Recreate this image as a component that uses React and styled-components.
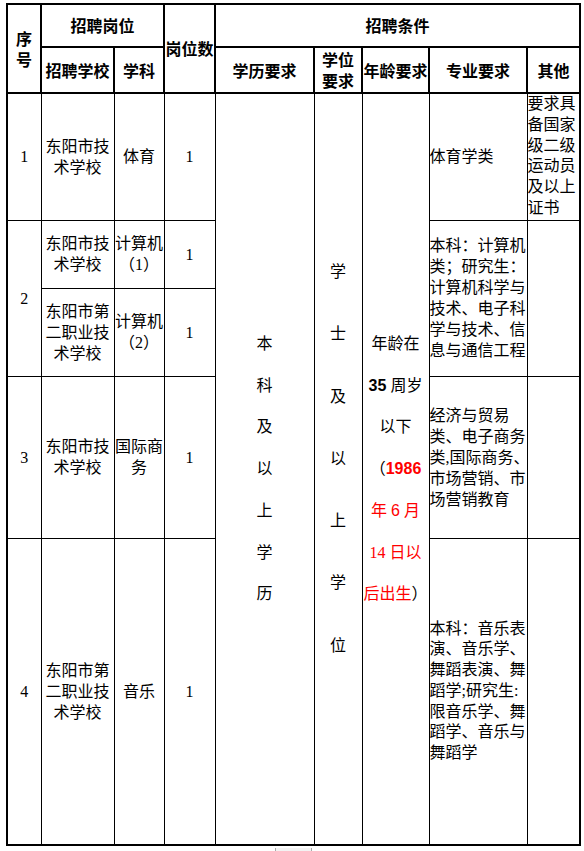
import React from "react";
import styled, { createGlobalStyle } from "styled-components";

const GlobalStyle = createGlobalStyle`
  html, body { margin: 0; padding: 0; background: #fff; }
  body {
    font-family: "Liberation Serif", "Noto Sans CJK SC", serif;
    color: #000;
  }
`;

const Page = styled.div`
  width: 584px;
  height: 851px;
  box-sizing: border-box;
  padding: 3px 0 0 6px;
  overflow: hidden;
`;

const Table = styled.table`
  border-collapse: collapse;
  table-layout: fixed;
  width: 573px;
  border: 2px solid #000;
`;

const Row = styled.tr`
  height: ${(p) => p.$h}px;
`;

const Th = styled.th`
  border: 2px solid #000;
  padding: 0;
  font-family: "Noto Sans CJK SC", sans-serif;
  font-weight: bold;
  font-size: 16px;
  line-height: 21px;
  text-align: center;
  vertical-align: middle;
  white-space: nowrap;
`;

const Td = styled.td`
  border: 1px solid #000;
  padding: 0;
  font-size: 16px;
  line-height: ${(p) => p.$lh || 21}px;
  text-align: ${(p) => p.$align || "center"};
  vertical-align: ${(p) => p.$valign || "middle"};
  white-space: nowrap;
  overflow: visible;
`;

const VText = styled.div`
  line-height: ${(p) => p.$lh}px;
  padding-bottom: ${(p) => p.$shift || 0}px;
  text-align: center;
`;

const Bold = styled.span`
  font-family: "Liberation Sans", "Noto Sans CJK SC", sans-serif;
  font-weight: bold;
`;

const Red = styled.span`
  color: #ff0000;
`;

const Sans = styled.span`
  font-family: "Liberation Sans", sans-serif;
`;

const Tab = styled.div`
  margin: 2px 0 0 269px;
  width: 35px;
  height: 8px;
  border-left: 1px solid #aaa;
  border-right: 1px solid #aaa;
  background: #f3f3f3;
  display: flex;
  justify-content: center;
  align-items: flex-end;
`;

const Dot = styled.span`
  width: 1px;
  height: 1px;
  background: #666;
  margin-bottom: 1px;
`;

const widths = [34, 73, 50, 51, 99, 48, 67, 98, 53];

const lines = (arr) =>
  arr.map((l, i) => (
    <React.Fragment key={i}>
      {i > 0 && <br />}
      {l}
    </React.Fragment>
  ));

export default function App() {
  return (
    <>
      <GlobalStyle />
      <Page>
        <Table>
          <colgroup>
            {widths.map((w, i) => (
              <col key={i} style={{ width: w }} />
            ))}
          </colgroup>
          <thead>
            <Row $h={43}>
              <Th rowSpan={2}>{lines(["序", "号"])}</Th>
              <Th colSpan={2}>招聘岗位</Th>
              <Th rowSpan={2}>岗位数</Th>
              <Th colSpan={5}>招聘条件</Th>
            </Row>
            <Row $h={46}>
              <Th>招聘学校</Th>
              <Th>学科</Th>
              <Th>学历要求</Th>
              <Th>{lines(["学位", "要求"])}</Th>
              <Th>年龄要求</Th>
              <Th>专业要求</Th>
              <Th>其他</Th>
            </Row>
          </thead>
          <tbody>
            <Row $h={127}>
              <Td>1</Td>
              <Td>{lines(["东阳市技", "术学校"])}</Td>
              <Td>体育</Td>
              <Td>1</Td>
              <Td rowSpan={5}>
                <VText $lh={41.7}>
                  {lines(["本", "科", "及", "以", "上", "学", "历"])}
                </VText>
              </Td>
              <Td rowSpan={5}>
                <VText $lh={62.3} $shift={20}>
                  {lines(["学", "士", "及", "以", "上", "学", "位"])}
                </VText>
              </Td>
              <Td rowSpan={5}>
                <VText $lh={41.7}>
                  年龄在
                  <br />
                  <Bold>35</Bold> 周岁
                  <br />
                  以下
                  <br />
                  （<Red><Bold>1986</Bold></Red>
                  <br />
                  <Red>
                    年 <Sans>6</Sans> 月
                  </Red>
                  <br />
                  <Red>14 日以</Red>
                  <br />
                  <Red>后出生</Red>）
                </VText>
              </Td>
              <Td $align="left">体育学类</Td>
              <Td $align="left" $valign="top" $lh={20.8}>
                {lines(["要求具", "备国家", "级二级", "运动员", "及以上", "证书"])}
              </Td>
            </Row>
            <Row $h={68}>
              <Td rowSpan={2}>2</Td>
              <Td>{lines(["东阳市技", "术学校"])}</Td>
              <Td>{lines(["计算机", "（1）"])}</Td>
              <Td>1</Td>
              <Td rowSpan={2} $align="left">
                {lines([
                  "本科：计算机",
                  "类；研究生：",
                  "计算机科学与",
                  "技术、电子科",
                  "学与技术、信",
                  "息与通信工程",
                ])}
              </Td>
              <Td rowSpan={2} />
            </Row>
            <Row $h={88}>
              <Td>{lines(["东阳市第", "二职业技", "术学校"])}</Td>
              <Td>{lines(["计算机", "（2）"])}</Td>
              <Td>1</Td>
            </Row>
            <Row $h={162}>
              <Td>3</Td>
              <Td>{lines(["东阳市技", "术学校"])}</Td>
              <Td>{lines(["国际商", "务"])}</Td>
              <Td>1</Td>
              <Td $align="left">
                {lines([
                  "经济与贸易",
                  "类、电子商务",
                  "类,国际商务、",
                  "市场营销、市",
                  "场营销教育",
                ])}
              </Td>
              <Td />
            </Row>
            <Row $h={307}>
              <Td>4</Td>
              <Td>{lines(["东阳市第", "二职业技", "术学校"])}</Td>
              <Td>音乐</Td>
              <Td>1</Td>
              <Td $align="left" $lh={20.7}>
                {lines([
                  "本科：音乐表",
                  "演、音乐学、",
                  "舞蹈表演、舞",
                  "蹈学;研究生:",
                  "限音乐学、舞",
                  "蹈学、音乐与",
                  "舞蹈学",
                ])}
              </Td>
              <Td />
            </Row>
          </tbody>
        </Table>
        <Tab>
          <Dot />
        </Tab>
      </Page>
    </>
  );
}
